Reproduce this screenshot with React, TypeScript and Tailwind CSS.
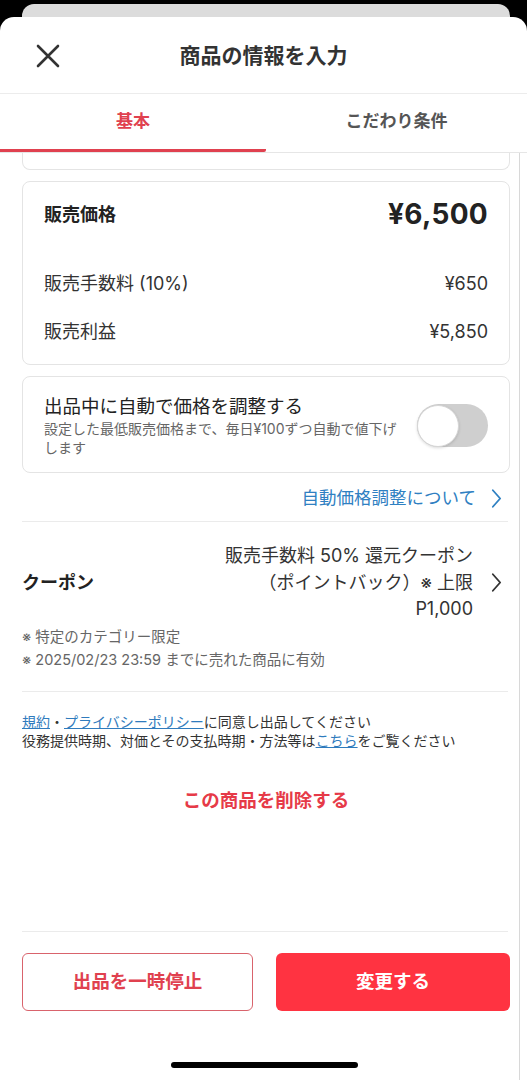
import React from "react";

const Chevron = ({ color, className }: { color: string; className?: string }) => (
  <svg viewBox="0 0 12 22" className={className} fill="none">
    <path d="M2 2 L10 11 L2 20" stroke={color} strokeWidth="2" strokeLinecap="round" strokeLinejoin="round" />
  </svg>
);

export default function App() {
  return (
    <div className="w-[527px] h-[1080px] bg-black overflow-hidden font-['Inter','Noto_Sans_CJK_JP',sans-serif] text-[#222]">
      <div className="mx-[22px] mt-[4px] h-[20px] w-[488px] rounded-t-[12px] bg-[#dcdcdc]" />
      <div className="-mt-[7px] h-[1063px] bg-white rounded-t-[14px] flex flex-col">
        {/* header */}
        <div className="h-[77px] grid grid-cols-[100px_1fr_100px] items-center border-b border-[#ececec]">
          <div className="pl-[36px] pt-[1px]">
            <svg viewBox="0 0 24 24" className="w-[24px] h-[24px]" fill="none">
              <path d="M2 2 L22 22 M22 2 L2 22" stroke="#333" strokeWidth="2.6" strokeLinecap="round" />
            </svg>
          </div>
          <div className="text-center text-[21px] font-bold text-[#333] leading-none pt-[1px]">商品の情報を入力</div>
          <div />
        </div>
        {/* tabs */}
        <div className="h-[59px] grid grid-cols-[266px_1fr] border-b border-[#e6e6e6]">
          <div className="flex items-center justify-center border-b-[3px] border-[#e0414f] rounded-r-[2px] text-[17px] font-bold text-[#e0414f] pt-[1px]">
            基本
          </div>
          <div className="flex items-center justify-center text-[17px] font-bold text-[#555] pb-[2px]">
            こだわり条件
          </div>
        </div>
        {/* body */}
        <div className="flex-1 flex flex-row min-h-0">
          <div className="w-[519px] pl-[22px] pr-[9px] flex flex-col">
            <div className="h-[17px] border border-t-0 border-[#e4e4e4] rounded-b-[8px]" />
            {/* price card */}
            <div className="mt-[11px] border border-[#e4e4e4] rounded-[8px] px-[21px] pt-[12px] pb-[13px]">
              <div className="h-[40px] flex items-center justify-between">
                <span className="text-[18px] font-bold">販売価格</span>
                <span className="text-[28px] font-bold tracking-[0.3px]">¥6,500</span>
              </div>
              <div className="mt-[29px] h-[40px] flex items-center justify-between text-[18px] text-[#333]">
                <span>販売手数料 (10%)</span>
                <span>¥650</span>
              </div>
              <div className="mt-[8px] h-[40px] flex items-center justify-between text-[18px] text-[#333]">
                <span>販売利益</span>
                <span>¥5,850</span>
              </div>
            </div>
            {/* auto adjust card */}
            <div className="mt-[11px] border border-[#e4e4e4] rounded-[8px] pl-[21px] pr-[21px] pt-[17px] pb-[15px] flex items-center">
              <div className="flex-1">
                <div className="text-[18.5px] leading-[24px] text-[#222]">出品中に自動で価格を調整する</div>
                <div className="text-[14px] leading-[19px] text-[#666] mt-[1px] w-[360px]">
                  設定した最低販売価格まで、毎日¥100ずつ自動で値下げします
                </div>
              </div>
              <div className="w-[71px] h-[43px] rounded-full bg-[#cfcfcf] flex items-center shrink-0">
                <div className="w-[42px] h-[42px] rounded-full bg-white border border-[#d6d6d6] shadow-[0_1px_3px_rgba(0,0,0,0.15)]" />
              </div>
            </div>
            {/* link row */}
            <div className="h-[48px] flex items-center justify-end gap-[15px] text-[17.5px] text-[#2f80c2] pr-[8px] pt-[2px]">
              <span>自動価格調整について</span>
              <Chevron color="#2f80c2" className="w-[11px] h-[21px]" />
            </div>
            <div className="border-t border-[#ebebeb] mr-[2px]" />
            {/* coupon */}
            <div className="pt-[21px] flex items-center justify-between">
              <span className="text-[18px] font-bold">クーポン</span>
              <div className="flex items-center gap-[18px] pr-[8px]">
                <div className="text-right text-[18px] leading-[26.5px] text-[#333]">
                  販売手数料 50% 還元クーポン
                  <br />
                  （ポイントバック）※ 上限
                  <br />
                  P1,000
                </div>
                <Chevron color="#333" className="w-[11px] h-[21px]" />
              </div>
            </div>
            <div className="mt-[2px] text-[14.5px] leading-[23px] text-[#666] pb-[20px]">
              <div>※ 特定のカテゴリー限定</div>
              <div>※ 2025/02/23 23:59 までに売れた商品に有効</div>
            </div>
            <div className="border-t border-[#ebebeb] mr-[2px]" />
            {/* terms */}
            <div className="pt-[20px] text-[14px] leading-[19px] text-[#333]">
              <div>
                <span className="text-[#2f7bbd] underline">規約</span>・
                <span className="text-[#2f7bbd] underline">プライバシーポリシー</span>に同意し出品してください
              </div>
              <div>
                役務提供時期、対価とその支払時期・方法等は<span className="text-[#2f7bbd] underline">こちら</span>をご覧ください
              </div>
            </div>
            <div className="mt-[38px] text-center text-[18.5px] leading-[24px] font-bold text-[#e63a48]">この商品を削除する</div>
            {/* footer */}
            <div className="mt-auto border-t border-[#ebebeb] mr-[2px]" />
            <div className="pt-[21px] flex gap-[23px]">
              <div className="w-[231px] h-[58px] rounded-[6px] border border-[#d9636c] flex items-center justify-center text-[18.5px] font-bold text-[#e0414f]">
                出品を一時停止
              </div>
              <div className="flex-1 h-[58px] rounded-[6px] bg-[#ff3341] flex items-center justify-center text-[18.5px] font-bold text-white">
                変更する
              </div>
            </div>
            <div className="h-[69px] flex items-end pb-[12px]">
              <div className="ml-[149px] w-[187px] h-[6px] rounded-full bg-black" />
            </div>
          </div>
          <div className="flex-1 border-l border-[#d8d8d8]" />
        </div>
      </div>
    </div>
  );
}
